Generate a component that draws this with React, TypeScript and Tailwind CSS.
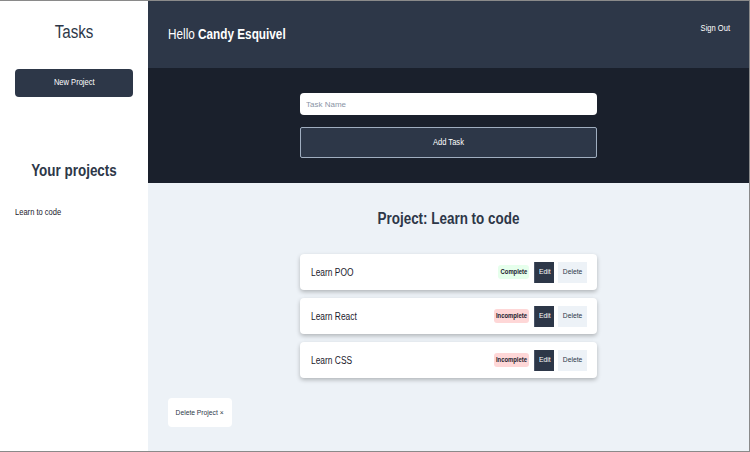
import React from 'react';

const tasks = [
  { name: 'Learn POO', done: true },
  { name: 'Learn React', done: false },
  { name: 'Learn CSS', done: false },
];

// the narrow face isn't installed, so squeeze Liberation Sans horizontally
function N({ children, origin = 'center' }: { children: React.ReactNode; origin?: 'left' | 'center' | 'right' }) {
  const o = origin === 'left' ? 'origin-left' : origin === 'right' ? 'origin-right' : 'origin-center';
  return <span className={`inline-block whitespace-nowrap scale-x-[0.84] ${o}`}>{children}</span>;
}

export default function App() {
  return (
    <div
      className="w-[750px] h-[452px] flex border-t border-r border-b border-[#8a8a8a] overflow-hidden text-[#2d3748]"
      style={{ fontFamily: '"Liberation Sans Narrow", "Liberation Sans", Arial, sans-serif' }}
    >
      {/* --- SIDEBAR --- */}
      <aside className="w-[148px] shrink-0 bg-white flex flex-col px-[15px]">
        <h1 className="text-[18px] text-center text-[#2d3748] mt-[20px] leading-[22px]">
          <N>Tasks</N>
        </h1>
        <button className="mt-[26px] h-[28px] w-full bg-[#2d3748] rounded text-white text-[9px]">
          <N>New Project</N>
        </button>
        <h2 className="mt-[64px] text-[16px] font-bold text-center leading-[20px]">
          <N>Your projects</N>
        </h2>
        <p className="mt-[25px] text-[9px] text-[#1a202c]">
          <N origin="left">Learn to code</N>
        </p>
      </aside>

      <main className="flex-1 flex flex-col bg-[#edf2f7]">
        {/* --- HEADER --- */}
        <header className="h-[67px] bg-[#2d3748] flex items-center justify-between pl-[20px] pr-[19px] text-white">
          <p className="text-[14px] flex-1">
            <N origin="left">
              Hello <span className="font-bold">Candy Esquivel</span>
            </N>
          </p>
          <button className="text-[9px] -mt-[12px] text-right">
            <N origin="right">Sign Out</N>
          </button>
        </header>

        {/* --- NEW TASK FORM --- */}
        <section className="bg-[#1a202c] h-[115px] flex flex-col items-center pt-[25px]">
          <div className="w-[297px] flex flex-col gap-[12px]">
            <input
              className="h-[22px] w-full bg-white rounded px-[6px] text-[8px] outline-none placeholder:text-[#8a94a6]"
              placeholder="Task Name"
            />
            <button className="h-[31px] w-full bg-[#2d3748] border border-[#a0aec0] rounded-[2px] text-white text-[9px]">
              <N>Add Task</N>
            </button>
          </div>
        </section>

        {/* --- PROJECT --- */}
        <section className="flex-1 flex flex-col px-[20px]">
          <h2 className="text-center text-[16px] font-bold mt-[26px] leading-[20px]">
            <N>Project: Learn to code</N>
          </h2>
          <ul className="mt-[25px] w-[297px] mx-auto flex flex-col gap-[8px]">
            {tasks.map((t) => (
              <li
                key={t.name}
                className="h-[36px] bg-white rounded shadow-[0_2px_4px_rgba(0,0,0,0.25)] flex items-center pl-[11px] pr-[10px]"
              >
                <span className="flex-1 text-[10px] text-[#1a202c]">
                  <N origin="left">{t.name}</N>
                </span>
                {t.done ? (
                  <span className="h-[14px] w-[31px] flex items-center justify-center rounded-[3px] bg-[#e6ffec] text-[7px] font-bold text-[#1a202c]">
                    <N>Complete</N>
                  </span>
                ) : (
                  <span className="h-[14px] w-[35px] flex items-center justify-center rounded-[3px] bg-[#fed7d7] text-[7px] font-bold text-[#1a202c]">
                    <N>Incomplete</N>
                  </span>
                )}
                <button className="ml-[5px] h-[21px] w-[20px] bg-[#2d3748] border-l border-[#4a5568] text-white text-[8px]">
                  <N>Edit</N>
                </button>
                <button className="ml-[4px] h-[21px] w-[29px] bg-[#edf2f7] text-[8px] text-[#2d3748]">
                  <N>Delete</N>
                </button>
              </li>
            ))}
          </ul>
          <button className="mt-[20px] self-start h-[29px] w-[64px] bg-white rounded text-[8px] text-[#2d3748]">
            <N>Delete Project ×</N>
          </button>
        </section>
      </main>
    </div>
  );
}
